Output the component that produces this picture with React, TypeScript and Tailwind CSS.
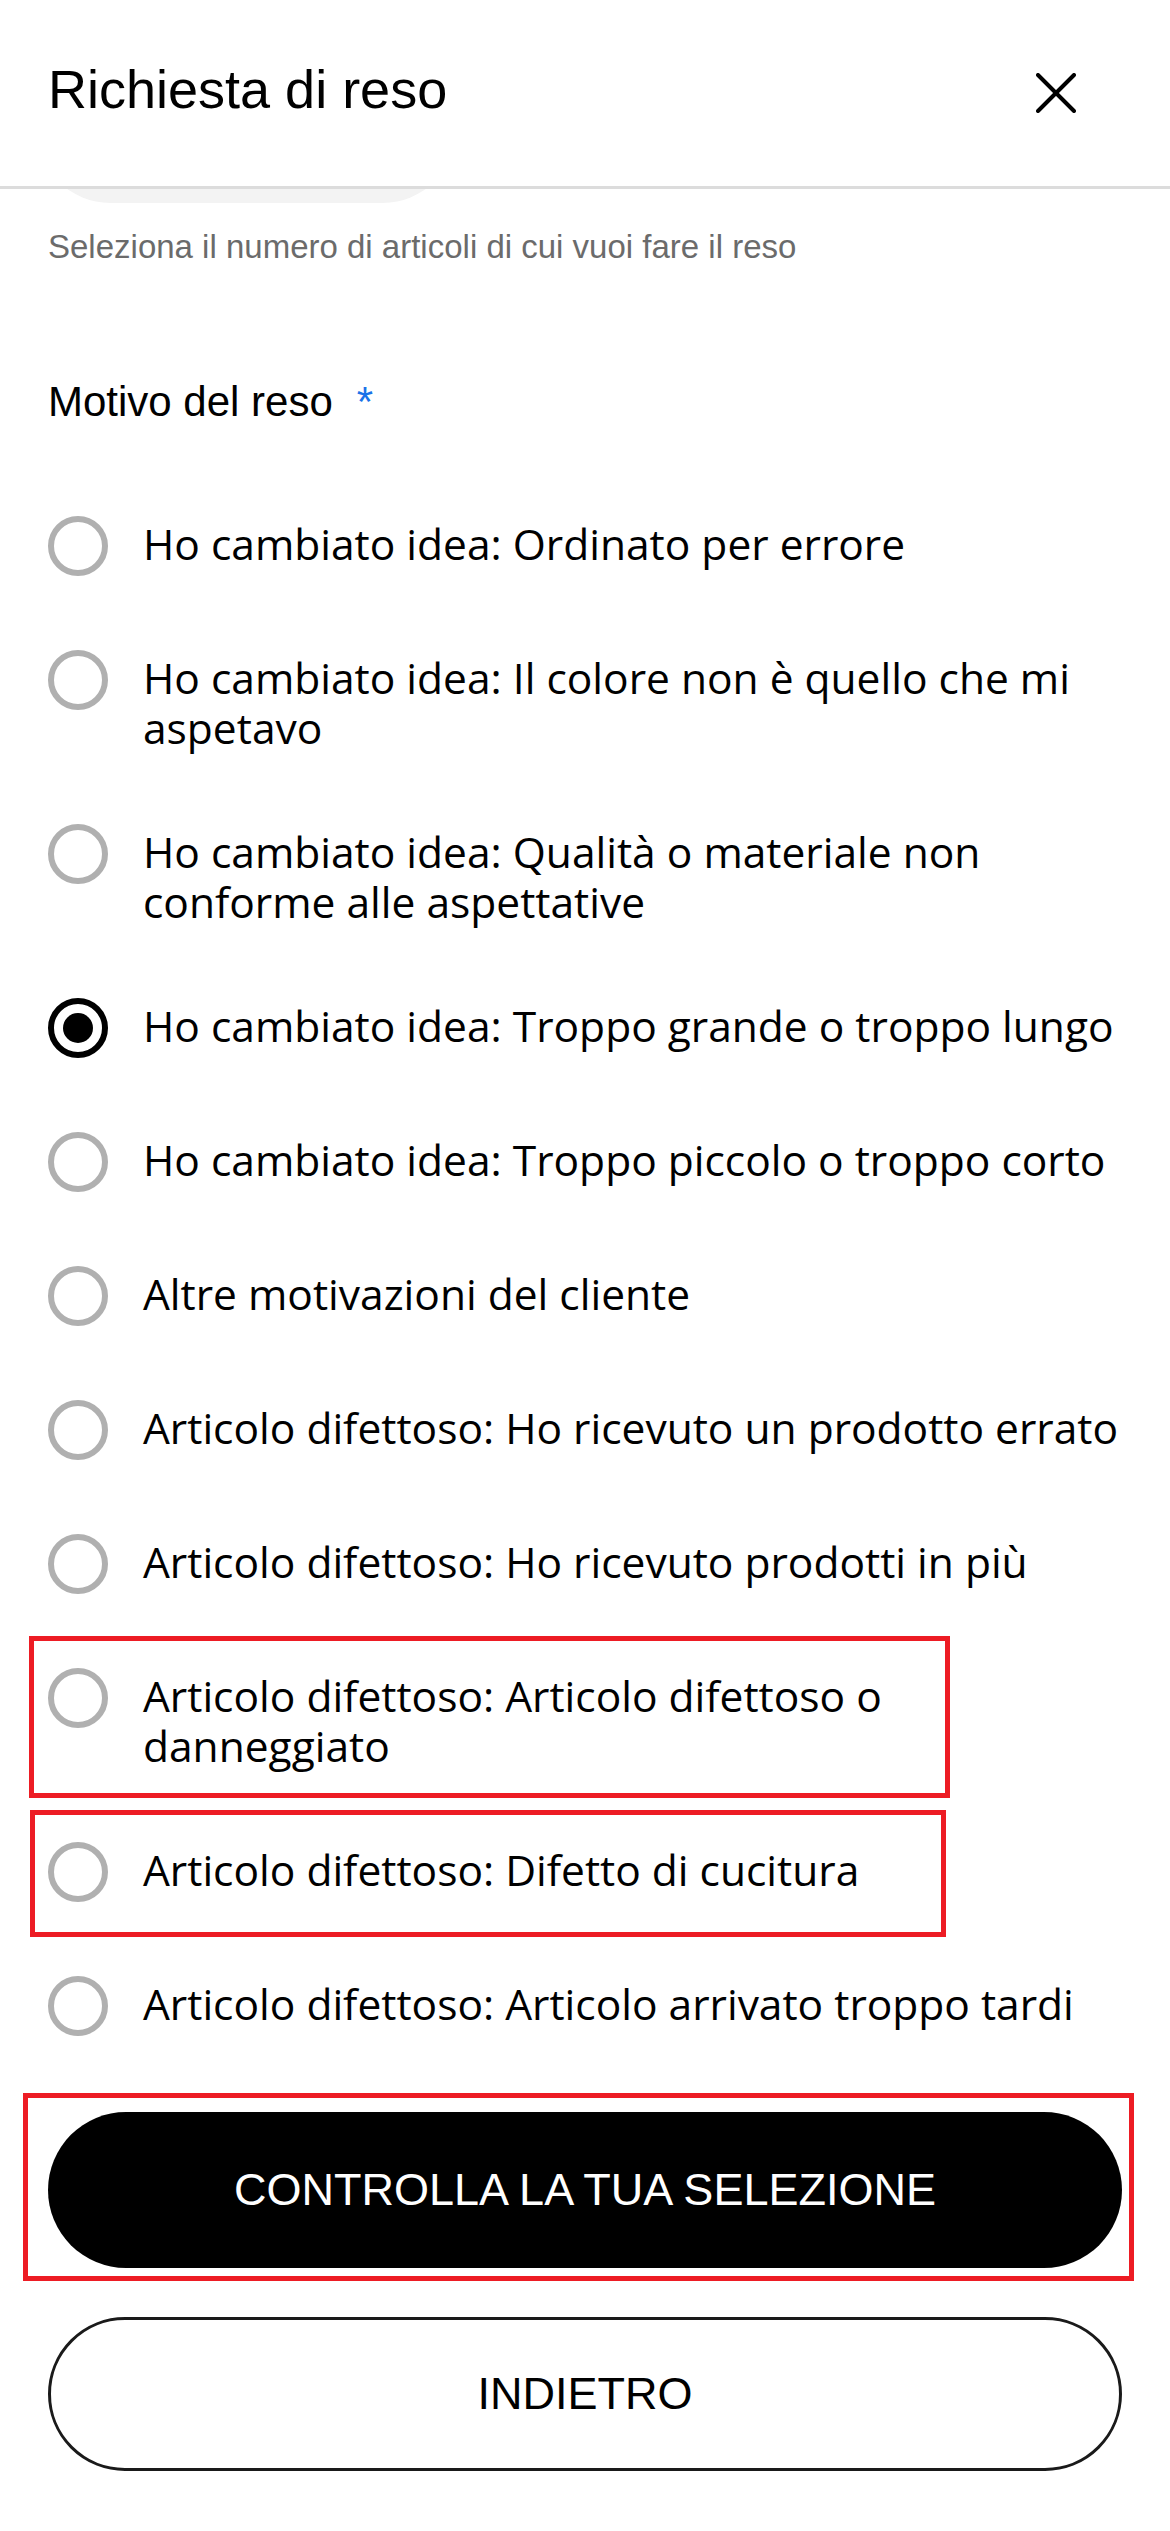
const reasons = [
  { label: "Ho cambiato idea: Ordinato per errore" },
  { label: "Ho cambiato idea: Il colore non è quello che mi aspetavo" },
  { label: "Ho cambiato idea: Qualità o materiale non conforme alle aspettative" },
  { label: "Ho cambiato idea: Troppo grande o troppo lungo", checked: true },
  { label: "Ho cambiato idea: Troppo piccolo o troppo corto" },
  { label: "Altre motivazioni del cliente" },
  { label: "Articolo difettoso: Ho ricevuto un prodotto errato" },
  { label: "Articolo difettoso: Ho ricevuto prodotti in più" },
  {
    label: "Articolo difettoso: Articolo difettoso o danneggiato",
    box: "-top-[32px] -left-[19px] w-[921px] h-[162px]",
  },
  {
    label: "Articolo difettoso: Difetto di cucitura",
    box: "-top-[32px] -left-[18px] w-[916px] h-[127px]",
  },
  { label: "Articolo difettoso: Articolo arrivato troppo tardi" },
];

function Radio({ checked }: { checked?: boolean }) {
  if (checked) {
    return (
      <span className="flex h-[60px] w-[60px] shrink-0 items-center justify-center rounded-full border-[6px] border-black">
        <span className="h-[30px] w-[30px] rounded-full bg-black" />
      </span>
    );
  }
  return <span className="h-[60px] w-[60px] shrink-0 rounded-full border-[6px] border-[#b0b0b0]" />;
}

function CloseIcon() {
  return (
    <svg width="40" height="40" viewBox="0 0 40 40" fill="none" stroke="black" strokeWidth="4" strokeLinecap="round">
      <path d="M2 2 38 38" />
      <path d="M38 2 2 38" />
    </svg>
  );
}

export default function App() {
  return (
    <div className="min-h-[2531px] w-[1170px] bg-white font-['Liberation_Sans',Arial,sans-serif] text-black">
      {/* Header */}
      <header className="flex h-[189px] items-start justify-between border-b-[3px] border-[#dcdcdc] pl-[48px] pr-[94px]">
        <h1 className="mt-[58px] text-[54px] leading-[62px] font-normal">Richiesta di reso</h1>
        <button className="mt-[73px] h-[40px] w-[40px]" aria-label="Chiudi">
          <CloseIcon />
        </button>
      </header>

      {/* Quantity pill scrolled under the header */}
      <div className="h-[14px] overflow-hidden">
        <div className="-mt-[130px] ml-[38px] h-[144px] w-[417px] rounded-full bg-[#f3f3f3]" />
      </div>

      <div className="px-[48px]">
        <p className="mt-[25px] text-[33px] leading-[38px] text-[#6b6b6b]">
          Seleziona il numero di articoli di cui vuoi fare il reso
        </p>

        <div className="mt-[112px] text-[42px] leading-[48px]">
          Motivo del reso
          <span className="ml-[24px] text-[#1a73e8]">*</span>
        </div>

        {/* Reasons */}
        <div className="mt-[90px] flex flex-col gap-[74px]">
          {reasons.map((r) => (
            <label key={r.label} className="relative flex items-start gap-[35px]">
              <Radio checked={r.checked} />
              <span className="-mb-[3px] mt-[3px] flex-1 font-['Open_Sans',sans-serif] text-[42.5px] leading-[50px]">
                {r.label}
              </span>
              {r.box && (
                <span className={`pointer-events-none absolute border-[5px] border-[#ed1c24] ${r.box}`} />
              )}
            </label>
          ))}
        </div>

        {/* Actions */}
        <div className="mt-[76px] flex flex-col gap-[49px]">
          <div className="relative">
            <button className="flex h-[156px] w-full items-center justify-center rounded-full bg-black text-[45px] text-white">
              CONTROLLA LA TUA SELEZIONE
            </button>
            <span className="pointer-events-none absolute -top-[19px] -left-[25px] h-[188px] w-[1111px] border-[5px] border-[#ed1c24]" />
          </div>
          <button className="flex h-[154px] w-full items-center justify-center rounded-full border-[3px] border-[#1a1a1a] bg-white text-[45px] text-black">
            INDIETRO
          </button>
        </div>
      </div>
    </div>
  );
}
